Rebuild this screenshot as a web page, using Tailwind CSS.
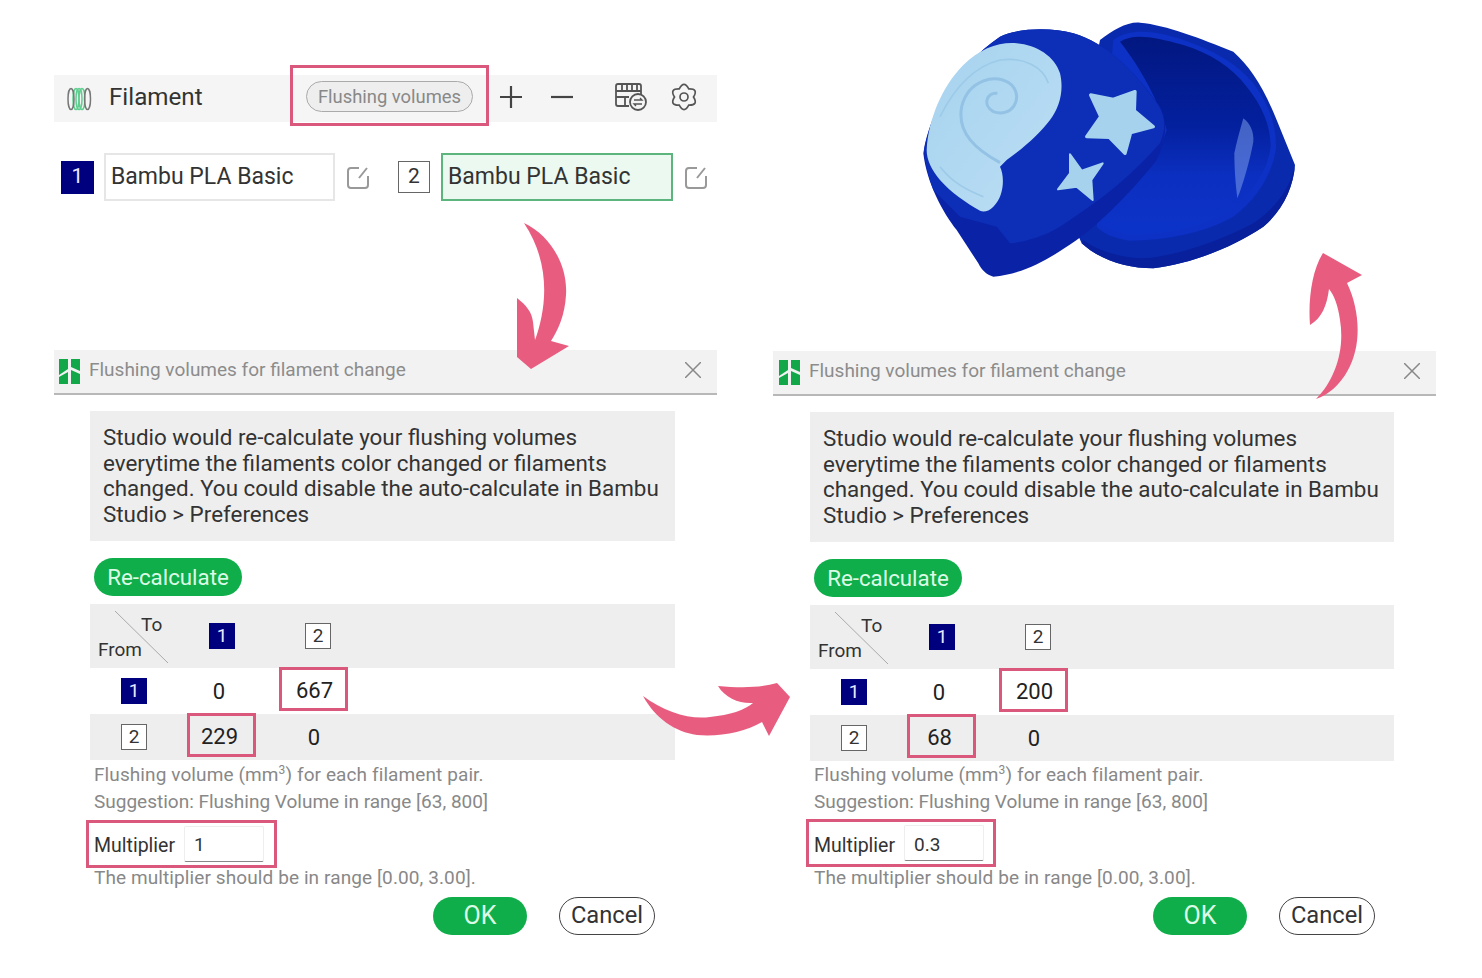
<!DOCTYPE html>
<html lang="en">
  <head>
    <meta charset="UTF-8" />
    <title>Flushing volumes</title>
    <script src="https://cdn.jsdelivr.net/npm/@tailwindcss/browser@4"></script>
  </head>
  <body class="bg-white font-['Roboto',sans-serif] text-[#333]">
    <div class="relative w-[1482px] h-[978px] overflow-hidden flex pl-[54px] gap-[56px]">
      <!-- left column -->
      <div class="w-[663px] shrink-0">
        <!-- toolbar -->
        <div class="mt-[75px] h-[47px] bg-[#f5f5f5] flex items-center relative">
          <svg class="ml-[12px] w-[26px] h-[26px]" viewBox="0 0 26 26" fill="none" stroke-width="1.500">
            <ellipse cx="10" cy="13" rx="3" ry="10.500" stroke="#5fcf8f" />
            <ellipse cx="13" cy="13" rx="3" ry="10.500" stroke="#5fcf8f" />
            <ellipse cx="16" cy="13" rx="3" ry="10.500" stroke="#5fcf8f" />
            <ellipse cx="5" cy="13" rx="3" ry="10.500" stroke="#777" />
            <ellipse cx="21.500" cy="13" rx="3" ry="10.500" stroke="#777" />
          </svg>
          <span class="ml-[17px] mb-[3px] text-[24.200px] leading-none">Filament</span>
          <div class="absolute left-[236px] top-[-10px] w-[199px] h-[61px] border-[3px] border-[#d9587c] flex items-center justify-center">
            <span class="mt-[2px] w-[167px] h-[31px] rounded-full border border-[#aaa] bg-[#eee] text-[#888] text-[18.400px] flex items-center justify-center">Flushing volumes</span>
          </div>
          <svg class="absolute left-[446px] top-[11px] w-[22px] h-[22px]" viewBox="0 0 22 22" stroke="#444" stroke-width="2.200"><path d="M0 11H22M11 0V22" /></svg>
          <svg class="absolute left-[497px] top-[11px] w-[22px] h-[22px]" viewBox="0 0 22 22" stroke="#444" stroke-width="2.200"><path d="M0 11H22" /></svg>
          <svg class="absolute left-[560px] top-[7px] w-[34px] h-[30px]" viewBox="0 0 34 30" fill="none" stroke="#555" stroke-width="1.800">
            <path d="M4 2H25Q27 2 27 4V13" />
            <path d="M4 2Q2 2 2 4V22Q2 24 4 24H15" />
            <path d="M2 9H27M8 3V9M13 3V9M18 3V9M23 3V9" />
            <path d="M2 15H15M11 15V24" />
            <circle cx="24" cy="20" r="8" fill="#f5f5f5" />
            <path d="M20 18H28L26 16M28 22H20L22 24" stroke-width="1.300" />
          </svg>
          <svg class="absolute left-[616px] top-[8px] w-[28px] h-[28px]" viewBox="0 0 28 28" fill="none" stroke="#555" stroke-width="1.700">
            <path d="M9.250 5.800Q14 -3 18.750 5.800Q28.700 5.500 23.500 14Q28.700 22.500 18.750 22.200Q14 31 9.250 22.200Q-0.700 22.500 4.500 14Q-0.700 5.500 9.250 5.800Z" />
            <circle cx="14" cy="14" r="4" />
          </svg>
        </div>
        <!-- filament row -->
        <div class="mt-[31px] h-[48px] flex items-center">
          <span class="ml-[7px] w-[33px] h-[33px] bg-[#00007f] text-[#e8e8ff] text-[21px] flex items-center justify-center">1</span>
          <span class="ml-[10px] w-[231px] h-[48px] border-2 border-[#e6e6e6] flex items-center pl-[5px] pt-[1px] text-[23px]">Bambu PLA Basic</span>
          <svg class="ml-[11px] w-[25px] h-[25px]" viewBox="0 0 25 25" fill="none" stroke="#999" stroke-width="2"><path d="M13 3H5Q2 3 2 6V20Q2 23 5 23H19Q22 23 22 20V11M13 13L21 3" /></svg>
          <span class="ml-[27px] w-[32px] h-[32px] border border-[#666] bg-white text-[21px] flex items-center justify-center">2</span>
          <span class="ml-[11px] w-[232px] h-[48px] border-2 border-[#5cb57c] bg-[#ecf9f0] flex items-center pl-[5px] pt-[1px] text-[23px]">Bambu PLA Basic</span>
          <svg class="ml-[11px] w-[25px] h-[25px]" viewBox="0 0 25 25" fill="none" stroke="#999" stroke-width="2"><path d="M13 3H5Q2 3 2 6V20Q2 23 5 23H19Q22 23 22 20V11M13 13L21 3" /></svg>
        </div>
        <!-- dialog -->
        <div class="mt-[149px]">
          <div class="h-[45px] bg-[#f2f2f2] border-b-2 border-[#b8b8b8] flex items-center relative">
            <svg class="ml-[5px] w-[21px] h-[25px]" viewBox="0 0 21 25"><path fill="#12a84a" d="M0 0H9V10L0 16ZM12 0H21V12L12 8ZM0 18L9 13V25H0ZM12 11L21 15V25H12Z" /></svg>
            <span class="ml-[9px] mb-[2px] text-[19px] text-[#8c8c8c]">Flushing volumes for filament change</span>
            <svg class="absolute left-[631px] top-[12px] w-[16px] h-[16px]" viewBox="0 0 16 16" stroke="#888" stroke-width="1.500"><path d="M0 0L16 16M16 0L0 16" /></svg>
          </div>
          <div class="ml-[36px] mt-[16px] w-[585px] h-[130px] bg-[#eee] pl-[13px] pt-[14px] text-[22.400px] leading-[25.500px]">
            <p>Studio would re-calculate your flushing volumes<br />everytime the filaments color changed or filaments<br />changed. You could disable the auto-calculate in Bambu<br />Studio &gt; Preferences</p>
          </div>
          <span class="ml-[40px] mt-[17px] pt-[1px] w-[148px] h-[38px] rounded-full bg-[#0fae4b] text-[#dcfbe6] text-[22.300px] flex items-center justify-center">Re-calculate</span>
          <div class="ml-[36px] mt-[8px] w-[585px] relative text-[22px]">
            <div class="h-[64px] bg-[#eee] relative">
              <span class="absolute left-[51px] top-[7px] text-[19px]">To</span>
              <span class="absolute left-[8px] top-[32px] text-[19px]">From</span>
              <svg class="absolute left-[25px] top-[7px] w-[53px] h-[52px]" viewBox="0 0 53 52" stroke="#aaa"><path d="M0 0L53 52" /></svg>
              <span class="absolute left-[119px] top-[19px] w-[26px] h-[26px] bg-[#00007f] text-[#e8e8ff] text-[19px] flex items-center justify-center">1</span>
              <span class="absolute left-[215px] top-[19px] w-[26px] h-[26px] bg-white border border-[#666] text-[19px] flex items-center justify-center">2</span>
            </div>
            <div class="h-[46px] relative">
              <span class="absolute left-[31px] top-[10px] w-[26px] h-[26px] bg-[#00007f] text-[#e8e8ff] text-[19px] flex items-center justify-center">1</span>
              <span class="absolute left-[119px] top-[7px] w-[20px] text-center text-[#222]">0</span>
              <span class="absolute left-[189px] top-[-1px] pl-[2px] pt-[3px] w-[69px] h-[44px] border-[3px] border-[#d9587c] flex items-center justify-center text-[#222]">667</span>
            </div>
            <div class="h-[46px] bg-[#eee] relative">
              <span class="absolute left-[31px] top-[10px] w-[26px] h-[26px] bg-white border border-[#666] text-[19px] flex items-center justify-center">2</span>
              <span class="absolute left-[97px] top-[-1px] pr-[4px] pt-[3px] w-[69px] h-[44px] border-[3px] border-[#d9587c] flex items-center justify-center text-[#222]">229</span>
              <span class="absolute left-[214px] top-[7px] w-[20px] text-center text-[#222]">0</span>
            </div>
          </div>
          <div class="ml-[40px] text-[19px] text-[#888]">
            <p class="mt-[1px] leading-[27px] tracking-[0.1px]">Flushing volume (mm<sup class="text-[12px] top-[-7px] leading-none">3</sup>) for each filament pair.</p>
            <p class="leading-[27px]">Suggestion: Flushing Volume in range [63, 800]</p>
          </div>
          <div class="ml-[32px] mt-[5px] w-[191px] h-[48px] border-[3px] border-[#d9587c] flex items-center pl-[5px] text-[19.500px]">
            <span class="w-[90px] pt-[3px]">Multiplier</span>
            <span class="w-[80px] h-[36px] bg-white border border-[#eee] border-b-[#888] rounded-[2px] flex items-center pl-[9px] pt-[2px] text-[19px]">1</span>
          </div>
          <p class="ml-[40px] text-[19px] leading-[20px] text-[#888] tracking-[0.1px]">The multiplier should be in range [0.00, 3.00].</p>
          <div class="mt-[9px] flex">
            <span class="ml-[379px] w-[94px] h-[38px] rounded-full bg-[#0fae4b] text-[#dcfbe6] text-[25px] flex items-center justify-center">OK</span>
            <span class="ml-[32px] w-[96px] h-[38px] rounded-full border-[1.500px] border-[#444] text-[23.700px] flex items-center justify-center">Cancel</span>
          </div>
        </div>
      </div>

      <!-- right column -->
      <div class="w-[663px] shrink-0">
        <div class="h-[351px]">
          <svg class="ml-[127px] w-[480px] h-[351px] block" viewBox="0 -30 1440 1053">
            <defs>
              <linearGradient id="cavity" x1="0" y1="0" x2="0" y2="1">
                <stop offset="0" stop-color="#021780" />
                <stop offset=".45" stop-color="#03209e" />
                <stop offset=".7" stop-color="#0b2fc0" />
                <stop offset="1" stop-color="#0c33c8" />
              </linearGradient>
              <linearGradient id="swirl" x1="0" y1="0" x2="1" y2="1">
                <stop offset="0" stop-color="#a6d2ee" />
                <stop offset="1" stop-color="#bcdff5" />
              </linearGradient>
            </defs>
            <!-- base -->
            <path fill="#0a2aae" d="M600 90C640 60 680 35 720 38 800 45 900 85 1000 125 1050 170 1090 230 1130 330L1185 465C1180 530 1150 600 1090 650 1000 710 880 760 760 775 680 775 600 750 545 700L500 600Z" />
            <path fill="#08209c" d="M545 700C600 750 680 775 760 775 880 760 1000 710 1090 650 1150 600 1180 530 1185 465 1170 540 1120 600 1060 640 950 700 800 745 720 745 650 740 590 720 550 690Z" />
            <path fill="#0c31c4" d="M640 90C690 55 760 60 850 90 940 120 1010 160 1060 220 1105 280 1130 345 1128 415 1118 490 1070 570 1000 620 910 672 790 690 690 692 640 685 610 670 590 650Z" />
            <path fill="url(#cavity)" d="M660 95C700 70 760 80 850 105 930 130 995 170 1040 230 1085 285 1112 345 1112 410 1104 480 1055 555 985 605 895 658 780 672 690 675 650 670 620 655 600 640L770 450 800 360C780 280 720 170 660 95Z" />
            <path fill="#7a9be8" opacity=".55" d="M1003 430C1010 395 1020 360 1030 325 1050 340 1062 365 1060 395 1050 450 1030 520 1012 565 1006 520 1003 470 1003 430Z" />
            <!-- lid -->
            <path fill="#0a22a6" d="M70 430C90 300 170 170 300 80 350 55 450 50 520 70 620 100 700 180 780 290 800 330 805 370 770 450 700 540 600 640 530 690 450 745 380 790 280 800 260 795 245 780 235 760L170 660C130 610 80 520 70 430Z" />
            <path fill="#0d2fb8" d="M72 420C95 300 170 170 300 80 350 55 450 50 520 70 620 100 700 180 775 285 795 320 800 350 780 400 700 490 620 560 480 650 420 685 370 695 330 700L290 650 180 620 100 540C85 500 75 460 72 420Z" />
            <!-- swirl -->
            <path fill="url(#swirl)" d="M80 420C85 330 125 230 190 165 240 115 300 95 350 100 410 105 465 140 480 190 492 240 480 290 450 330 420 370 370 415 320 450L300 470C315 500 312 560 280 590 265 605 250 607 240 602 200 580 150 545 120 510 95 480 80 450 80 420Z" />
            <path fill="none" stroke="#93c2e4" stroke-width="9" d="M300 458C230 420 170 370 185 290 205 210 290 185 335 225 372 265 335 325 280 305 245 285 262 245 292 250" />
            <path fill="none" stroke="#9ccae8" stroke-width="5" d="M120 470C160 520 200 540 250 560M120 320C160 240 220 170 300 150 370 140 430 170 445 220" />
            <!-- stars -->
            <path fill="#a6d2ee" stroke="#a6d2ee" stroke-width="10" stroke-linejoin="round" d="M572 255 640 268 705 245 703 302 760 350 692 368 675 430 628 382 560 380 602 320Z" />
            <path fill="#a6d2ee" stroke="#a6d2ee" stroke-width="6" stroke-linejoin="round" d="M510 433 545 482 608 460 574 510 578 570 530 530 474 538 510 490Z" />
          </svg>
        </div>
        <div>
          <div class="h-[45px] bg-[#f2f2f2] border-b-2 border-[#b8b8b8] flex items-center relative">
            <svg class="ml-[6px] w-[21px] h-[25px]" viewBox="0 0 21 25"><path fill="#12a84a" d="M0 0H9V10L0 16ZM12 0H21V12L12 8ZM0 18L9 13V25H0ZM12 11L21 15V25H12Z" /></svg>
            <span class="ml-[9px] mb-[2px] text-[19px] text-[#8c8c8c]">Flushing volumes for filament change</span>
            <svg class="absolute left-[631px] top-[12px] w-[16px] h-[16px]" viewBox="0 0 16 16" stroke="#888" stroke-width="1.500"><path d="M0 0L16 16M16 0L0 16" /></svg>
          </div>
          <div class="ml-[37px] mt-[16px] w-[584px] h-[130px] bg-[#eee] pl-[13px] pt-[14px] text-[22.400px] leading-[25.500px]">
            <p>Studio would re-calculate your flushing volumes<br />everytime the filaments color changed or filaments<br />changed. You could disable the auto-calculate in Bambu<br />Studio &gt; Preferences</p>
          </div>
          <span class="ml-[41px] mt-[17px] pt-[1px] w-[148px] h-[38px] rounded-full bg-[#0fae4b] text-[#dcfbe6] text-[22.300px] flex items-center justify-center">Re-calculate</span>
          <div class="ml-[37px] mt-[8px] w-[584px] relative text-[22px]">
            <div class="h-[64px] bg-[#eee] relative">
              <span class="absolute left-[51px] top-[7px] text-[19px]">To</span>
              <span class="absolute left-[8px] top-[32px] text-[19px]">From</span>
              <svg class="absolute left-[25px] top-[7px] w-[53px] h-[52px]" viewBox="0 0 53 52" stroke="#aaa"><path d="M0 0L53 52" /></svg>
              <span class="absolute left-[119px] top-[19px] w-[26px] h-[26px] bg-[#00007f] text-[#e8e8ff] text-[19px] flex items-center justify-center">1</span>
              <span class="absolute left-[215px] top-[19px] w-[26px] h-[26px] bg-white border border-[#666] text-[19px] flex items-center justify-center">2</span>
            </div>
            <div class="h-[46px] relative">
              <span class="absolute left-[31px] top-[10px] w-[26px] h-[26px] bg-[#00007f] text-[#e8e8ff] text-[19px] flex items-center justify-center">1</span>
              <span class="absolute left-[119px] top-[7px] w-[20px] text-center text-[#222]">0</span>
              <span class="absolute left-[189px] top-[-1px] pl-[2px] pt-[3px] w-[69px] h-[44px] border-[3px] border-[#d9587c] flex items-center justify-center text-[#222]">200</span>
            </div>
            <div class="h-[46px] bg-[#eee] relative">
              <span class="absolute left-[31px] top-[10px] w-[26px] h-[26px] bg-white border border-[#666] text-[19px] flex items-center justify-center">2</span>
              <span class="absolute left-[97px] top-[-1px] pr-[4px] pt-[3px] w-[69px] h-[44px] border-[3px] border-[#d9587c] flex items-center justify-center text-[#222]">68</span>
              <span class="absolute left-[214px] top-[7px] w-[20px] text-center text-[#222]">0</span>
            </div>
          </div>
          <div class="ml-[41px] text-[19px] text-[#888]">
            <p class="leading-[27px] tracking-[0.1px]">Flushing volume (mm<sup class="text-[12px] top-[-7px] leading-none">3</sup>) for each filament pair.</p>
            <p class="leading-[27px]">Suggestion: Flushing Volume in range [63, 800]</p>
          </div>
          <div class="ml-[33px] mt-[4px] w-[190px] h-[48px] border-[3px] border-[#d9587c] flex items-center pl-[5px] text-[19.500px]">
            <span class="w-[90px] pt-[5px]">Multiplier</span>
            <span class="w-[80px] h-[36px] bg-white border border-[#eee] border-b-[#888] rounded-[2px] flex items-center pl-[9px] pt-[4px] text-[19px]">0.3</span>
          </div>
          <p class="ml-[41px] mt-[1px] text-[19px] leading-[20px] text-[#888] tracking-[0.1px]">The multiplier should be in range [0.00, 3.00].</p>
          <div class="mt-[9px] flex">
            <span class="ml-[380px] w-[94px] h-[38px] rounded-full bg-[#0fae4b] text-[#dcfbe6] text-[25px] flex items-center justify-center">OK</span>
            <span class="ml-[32px] w-[96px] h-[38px] rounded-full border-[1.500px] border-[#444] text-[23.700px] flex items-center justify-center">Cancel</span>
          </div>
        </div>
      </div>

      <!-- arrows lie over the dialogs -->
      <svg class="absolute inset-0 w-[1482px] h-[978px] pointer-events-none" viewBox="0 0 1482 978" fill="#e85d7f">
        <path d="M524 223C550 235 568 265 566 295 565 315 558 330 551 341L569 346 531 369 517 357 517 298C526 305 532 312 533 322L535 340C546 310 552 265 524 223Z" />
        <path d="M1323 253 1362 275 1347 283C1360 310 1362 345 1348 370 1340 385 1328 395 1316 399 1335 380 1345 350 1340 320 1338 305 1334 295 1329 289 1327 305 1322 318 1310 325 1308 300 1312 270 1323 253Z" />
        <path d="M643 696C665 712 690 720 710 717 730 715 745 710 753 703 740 704 725 698 718 686 740 688 760 688 777 683L790 697 769 736 762 722C745 732 720 737 697 735 675 732 655 718 643 696Z" />
      </svg>
    </div>
  </body>
</html>
